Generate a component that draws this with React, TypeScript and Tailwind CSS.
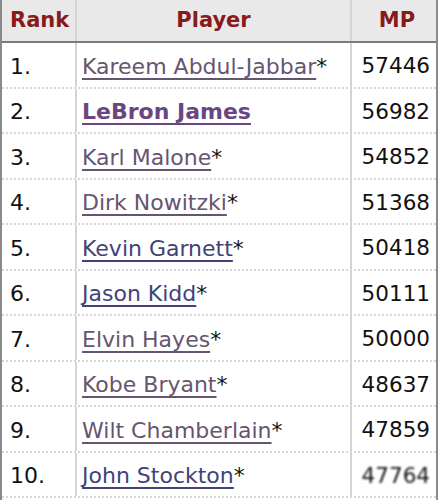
import React from 'react';

const rows = [
  { rank: '1.', name: 'Kareem Abdul-Jabbar', star: true, mp: '57446', color: 'text-[#665570] decoration-[#665570]' },
  { rank: '2.', name: 'LeBron James', star: false, mp: '56982', color: 'text-[#6a4680] decoration-[#6a4680] font-bold', },
  { rank: '3.', name: 'Karl Malone', star: true, mp: '54852', color: 'text-[#665570] decoration-[#665570]' },
  { rank: '4.', name: 'Dirk Nowitzki', star: true, mp: '51368', color: 'text-[#665570] decoration-[#665570]' },
  { rank: '5.', name: 'Kevin Garnett', star: true, mp: '50418', color: 'text-[#3f4378] decoration-[#3f4378]' },
  { rank: '6.', name: 'Jason Kidd', star: true, mp: '50111', color: 'text-[#3f4378] decoration-[#3f4378]' },
  { rank: '7.', name: 'Elvin Hayes', star: true, mp: '50000', color: 'text-[#665570] decoration-[#665570]' },
  { rank: '8.', name: 'Kobe Bryant', star: true, mp: '48637', color: 'text-[#665570] decoration-[#665570]' },
  { rank: '9.', name: 'Wilt Chamberlain', star: true, mp: '47859', color: 'text-[#665570] decoration-[#665570]' },
  { rank: '10.', name: 'John Stockton', star: true, mp: '47764', color: 'text-[#3f4378] decoration-[#3f4378]' },
];

const App = () => {
  return (
    <div className="w-[438px] h-[500px] overflow-hidden bg-white font-['DejaVu_Sans',Verdana,sans-serif] text-[22px] text-[#111]">
      <div className="border-x-2 border-x-[#8a8a8a] h-full">
        {/* header */}
        <div className="flex h-[43px] bg-[#e9e9e9] border-b-2 border-b-[#7a7a7a] font-bold text-[#8a1a1a] text-[21px]">
          <div className="w-[75px] flex items-center pl-[8px] border-r-2 border-r-[#d4d4d4]">Rank</div>
          <div className="w-[275px] flex items-center justify-center border-r-2 border-r-[#d4d4d4]">Player</div>
          <div className="flex-1 flex items-center justify-center pl-[6px]">MP</div>
        </div>
        {rows.map((r, i) => (
          <div key={r.rank} className="flex h-[45.5px] border-b-2 border-dotted border-b-[#d6d6d6]">
            <div className="w-[75px] flex items-center pt-[3px] pl-[8px] border-r-2 border-r-[#d4d4d4]">{r.rank}</div>
            <div className="w-[275px] flex items-center pt-[3px] pl-[5px] border-r-2 border-r-[#d4d4d4] whitespace-nowrap">
              <span className={`underline underline-offset-[4px] decoration-2 [text-decoration-skip-ink:none] ${r.color}`}>{r.name}</span>
              {r.star && <span>*</span>}
            </div>
            <div className="flex-1 flex items-center justify-end pt-[3px] pr-[6px] text-[21.5px]">
              {i === 9 ? <span className="blur-[1px]">{r.mp}</span> : r.mp}
            </div>
          </div>
        ))}
      </div>
    </div>
  );
};

export default App;
